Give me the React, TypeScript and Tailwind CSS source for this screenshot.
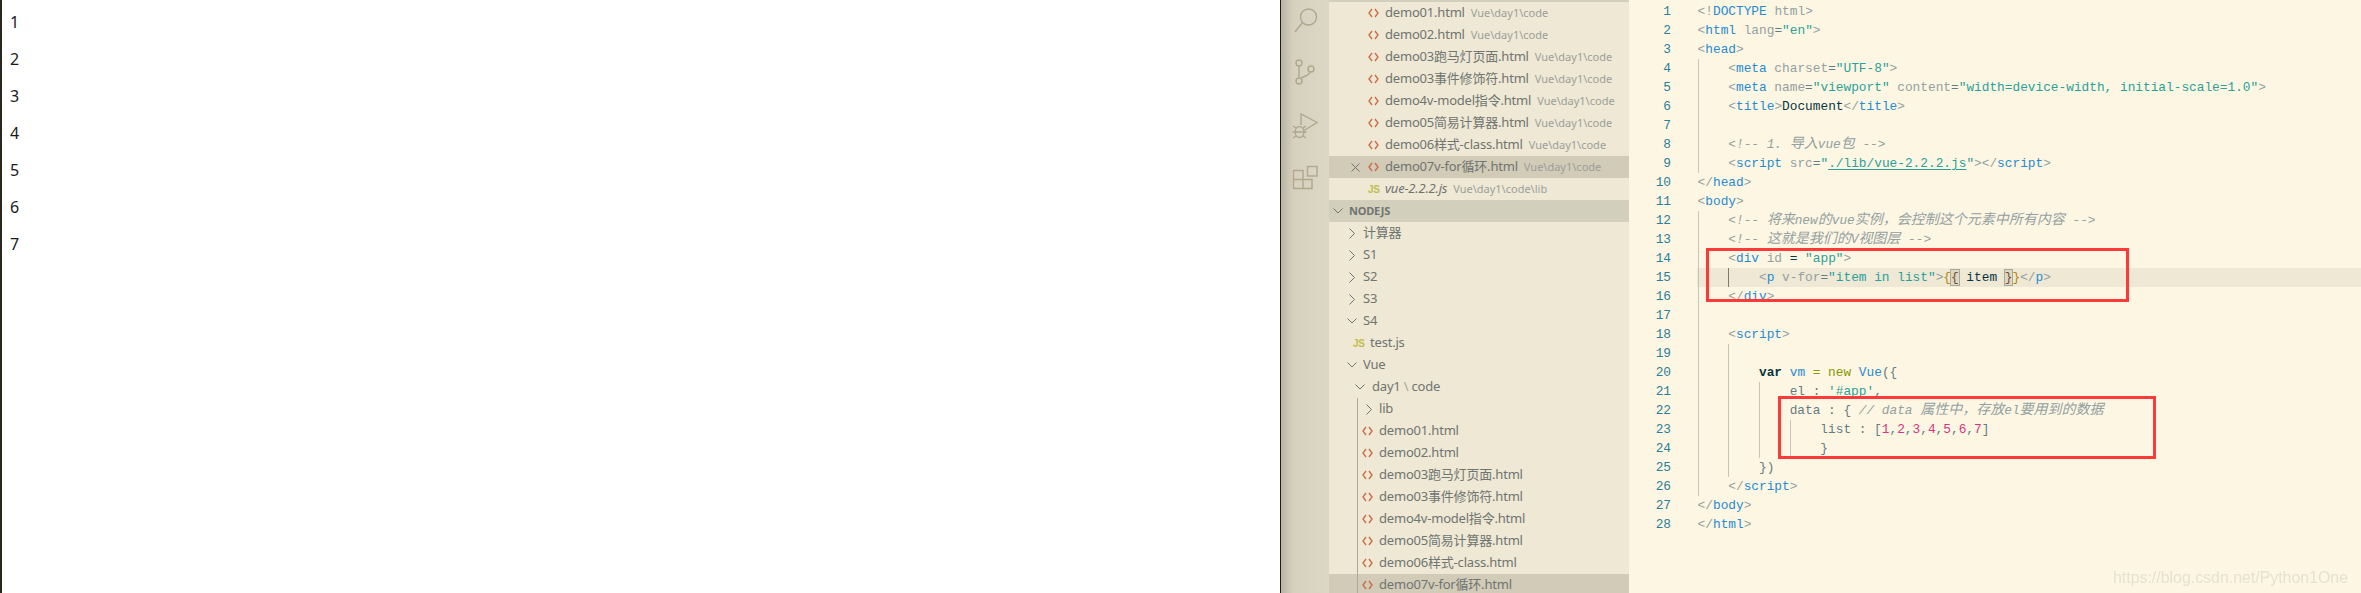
import React from 'react';

const cjk = '"Noto Sans CJK SC"';

type Token = [string, string];

const BR = 'text-[#93a1a1]';
const TAG = 'text-[#268bd2]';
const ATTR = 'text-[#93a1a1]';
const STR = 'text-[#2aa198]';
const TXT = 'text-[#657b83]';
const DARK = 'text-[#073642]';
const COM = 'text-[#93a1a1] italic';
const ZH = 'text-[#93a1a1] italic text-[14px]';
const KEY = 'text-[#859900]';
const NUM = 'text-[#d33682]';
const LINK = 'text-[#2aa198] underline underline-offset-2';

interface CodeLine {
  indent: number;
  guides: number;
  tokens: Token[];
}

const tag = (name: string, close = false): Token[] => [
  [close ? '</' : '<', BR],
  [name, TAG],
  ['>', BR],
];

const lines: CodeLine[] = [
  { indent: 0, guides: 0, tokens: [['<!', BR], ['DOCTYPE', TAG], [' html', ATTR], ['>', BR]] },
  { indent: 0, guides: 0, tokens: [['<', BR], ['html', TAG], [' lang', ATTR], ['=', TXT], ['"en"', STR], ['>', BR]] },
  { indent: 0, guides: 0, tokens: tag('head') },
  { indent: 1, guides: 1, tokens: [['<', BR], ['meta', TAG], [' charset', ATTR], ['=', TXT], ['"UTF-8"', STR], ['>', BR]] },
  {
    indent: 1,
    guides: 1,
    tokens: [
      ['<', BR],
      ['meta', TAG],
      [' name', ATTR],
      ['=', TXT],
      ['"viewport"', STR],
      [' content', ATTR],
      ['=', TXT],
      ['"width=device-width, initial-scale=1.0"', STR],
      ['>', BR],
    ],
  },
  { indent: 1, guides: 1, tokens: [...tag('title'), ['Document', DARK], ...tag('title', true)] },
  { indent: 1, guides: 1, tokens: [] },
  { indent: 1, guides: 1, tokens: [['<!-- 1. ', COM], ['导入', ZH], ['vue', COM], ['包', ZH], [' -->', COM]] },
  {
    indent: 1,
    guides: 1,
    tokens: [
      ['<', BR],
      ['script', TAG],
      [' src', ATTR],
      ['=', TXT],
      ['"', STR],
      ['./lib/vue-2.2.2.js', LINK],
      ['"', STR],
      ['>', BR],
      ...tag('script', true),
    ],
  },
  { indent: 0, guides: 0, tokens: tag('head', true) },
  { indent: 0, guides: 0, tokens: tag('body') },
  {
    indent: 1,
    guides: 1,
    tokens: [
      ['<!-- ', COM],
      ['将来', ZH],
      ['new', COM],
      ['的', ZH],
      ['vue', COM],
      ['实例，会控制这个元素中所有内容', ZH],
      [' -->', COM],
    ],
  },
  { indent: 1, guides: 1, tokens: [['<!-- ', COM], ['这就是我们的', ZH], ['V', COM], ['视图层', ZH], [' -->', COM]] },
  { indent: 1, guides: 1, tokens: [['<', BR], ['div', TAG], [' id', ATTR], [' = ', DARK], ['"app"', STR], ['>', BR]] },
  {
    indent: 2,
    guides: 2,
    tokens: [
      ['<', BR],
      ['p', TAG],
      [' v-for', ATTR],
      ['=', TXT],
      ['"item in list"', STR],
      ['>', BR],
      ['{', 'text-[#b58900]'],
      ['{', 'text-[#7a4a2a] bg-[#dcd8c6] outline outline-[#a9a99a]'],
      [' item ', DARK],
      ['}', 'text-[#7a4a2a] bg-[#dcd8c6] outline outline-[#a9a99a]'],
      ['}', 'text-[#b58900]'],
      ['</', BR],
      ['p', TAG],
      ['>', BR],
    ],
  },
  { indent: 1, guides: 1, tokens: tag('div', true) },
  { indent: 1, guides: 1, tokens: [] },
  { indent: 1, guides: 1, tokens: tag('script') },
  { indent: 2, guides: 2, tokens: [] },
  {
    indent: 2,
    guides: 2,
    tokens: [
      ['var', 'text-[#073642] font-bold'],
      [' ', TXT],
      ['vm', TAG],
      [' = ', KEY],
      ['new', KEY],
      [' ', TXT],
      ['Vue', TAG],
      ['({', TXT],
    ],
  },
  { indent: 3, guides: 3, tokens: [['el', TXT], [' : ', TXT], ["'", STR], ['#app', STR], ["'", STR], [',', TXT]] },
  {
    indent: 3,
    guides: 3,
    tokens: [
      ['data', TXT],
      [' : { ', TXT],
      ['// data ', COM],
      ['属性中，存放', ZH],
      ['el', COM],
      ['要用到的数据', ZH],
    ],
  },
  {
    indent: 4,
    guides: 4,
    tokens: [
      ['list', TXT],
      [' : [', TXT],
      ['1', NUM],
      [',', TXT],
      ['2', NUM],
      [',', TXT],
      ['3', NUM],
      [',', TXT],
      ['4', NUM],
      [',', TXT],
      ['5', NUM],
      [',', TXT],
      ['6', NUM],
      [',', TXT],
      ['7', NUM],
      [']', TXT],
    ],
  },
  { indent: 4, guides: 4, tokens: [['}', TXT]] },
  { indent: 2, guides: 2, tokens: [['})', TXT]] },
  { indent: 1, guides: 1, tokens: tag('script', true) },
  { indent: 0, guides: 0, tokens: tag('body', true) },
  { indent: 0, guides: 0, tokens: tag('html', true) },
];

function FileIcon() {
  return (
    <svg width="11" height="10" viewBox="0 0 11 10" fill="none" stroke="#c9704a" strokeWidth="1.4" className="mr-[6px] shrink-0">
      <path d="M4 1 L1 5 L4 9" />
      <path d="M7 1 L10 5 L7 9" />
    </svg>
  );
}

function JsIcon() {
  return (
    <span
      className="w-[11px] mr-[6px] shrink-0 text-[10px] font-bold text-[#c3bd4c]"
      style={{ fontFamily: '"Liberation Sans", sans-serif' }}
    >
      JS
    </span>
  );
}

function ChevronRight({ className }: { className: string }) {
  return (
    <svg width="6" height="11" viewBox="0 0 6 11" fill="none" stroke="#6f7570" strokeWidth="1" className={`shrink-0 ${className}`}>
      <path d="M0.5 0.5 L5.5 5.5 L0.5 10.5" />
    </svg>
  );
}

function ChevronDown({ className }: { className: string }) {
  return (
    <svg width="10" height="6" viewBox="0 0 10 6" fill="none" stroke="#6f7570" strokeWidth="1" className={`shrink-0 ${className}`}>
      <path d="M0.5 0.5 L5 5 L9.5 0.5" />
    </svg>
  );
}

function Suffix({ children }: { children: string }) {
  return <span className="ml-[6px] text-[11px] tracking-normal text-[#9aa09a]">{children}</span>;
}

const openFiles = [
  ['demo01.html', 'Vue\\day1\\code'],
  ['demo02.html', 'Vue\\day1\\code'],
  ['demo03跑马灯页面.html', 'Vue\\day1\\code'],
  ['demo03事件修饰符.html', 'Vue\\day1\\code'],
  ['demo4v-model指令.html', 'Vue\\day1\\code'],
  ['demo05简易计算器.html', 'Vue\\day1\\code'],
  ['demo06样式-class.html', 'Vue\\day1\\code'],
];

const treeFiles = [
  'demo01.html',
  'demo02.html',
  'demo03跑马灯页面.html',
  'demo03事件修饰符.html',
  'demo4v-model指令.html',
  'demo05简易计算器.html',
  'demo06样式-class.html',
];

const rowClass = 'flex items-center h-[22px] whitespace-nowrap tracking-[-0.2px]';

function Sidebar() {
  return (
    <div
      className="w-[300px] shrink-0 h-full overflow-hidden bg-[#eee8d5] text-[13px] text-[#6f7570]"
      style={{ fontFamily: `"Noto Sans", ${cjk}, sans-serif` }}
    >
      <div className="h-[2px] bg-[#d3cfbd]" />
      {openFiles.map(([name, path]) => (
        <div key={name} className={`${rowClass} pl-[39px]`}>
          <FileIcon />
          <span>{name}</span>
          <Suffix>{path}</Suffix>
        </div>
      ))}
      <div className={`${rowClass} pl-[22px] bg-[#d1cbb8]`}>
        <svg width="9" height="9" viewBox="0 0 9 9" stroke="#6f7570" strokeWidth="1" className="mr-[8px] shrink-0">
          <path d="M0.5 0.5 L8.5 8.5 M8.5 0.5 L0.5 8.5" />
        </svg>
        <FileIcon />
        <span>demo07v-for循环.html</span>
        <Suffix>Vue\day1\code</Suffix>
      </div>
      <div className={`${rowClass} pl-[39px]`}>
        <JsIcon />
        <span className="italic">vue-2.2.2.js</span>
        <Suffix>Vue\day1\code\lib</Suffix>
      </div>
      <div className={`${rowClass} pl-[4px] bg-[#d3cfbd]`}>
        <ChevronDown className="mr-[6px]" />
        <span className="text-[11px] font-bold">NODEJS</span>
      </div>
      {['计算器', 'S1', 'S2', 'S3'].map((name) => (
        <div key={name} className={`${rowClass} pl-[20px]`}>
          <ChevronRight className="mr-[8px]" />
          <span>{name}</span>
        </div>
      ))}
      <div className={`${rowClass} pl-[18px]`}>
        <ChevronDown className="mr-[6px]" />
        <span>S4</span>
      </div>
      <div className={`${rowClass} pl-[24px]`}>
        <JsIcon />
        <span>test.js</span>
      </div>
      <div className={`${rowClass} pl-[18px]`}>
        <ChevronDown className="mr-[6px]" />
        <span>Vue</span>
      </div>
      <div className={`${rowClass} pl-[26px]`}>
        <ChevronDown className="mr-[7px]" />
        <span>
          day1 <span className="text-[#a9a99a]">\</span> code
        </span>
      </div>
      <div className="relative">
        <div className="absolute left-[28px] top-0 bottom-0 w-px bg-[#aeaa99] z-10" />
        <div className={`${rowClass} pl-[37px]`}>
          <ChevronRight className="mr-[7px]" />
          <span>lib</span>
        </div>
        {treeFiles.map((name) => (
          <div key={name} className={`${rowClass} pl-[33px]`}>
            <FileIcon />
            <span>{name}</span>
          </div>
        ))}
        <div className={`${rowClass} pl-[33px] bg-[#d1cbb8]`}>
          <FileIcon />
          <span>demo07v-for循环.html</span>
        </div>
      </div>
    </div>
  );
}

function ActivityBar() {
  return (
    <div className="w-[49px] shrink-0 h-full border-l border-[#1f1c16] bg-linear-to-r from-[#b8b4a2] via-[#d6d1be] via-25% to-[#ddd8c5]">
      <svg width="48" height="52" viewBox="0 0 48 52" fill="none" stroke="#b0a78e" strokeWidth="1.4">
        <circle cx="27.5" cy="17" r="8" />
        <path d="M21.5 22.5 L14 32" />
      </svg>
      <svg width="48" height="52" viewBox="0 0 48 52" fill="none" stroke="#b0a78e" strokeWidth="1.4">
        <circle cx="18" cy="11" r="3" />
        <circle cx="18" cy="29" r="3" />
        <circle cx="30" cy="17" r="3" />
        <path d="M18 14 V26 M29 20 C28 24 22 24 20 26.5" />
      </svg>
      <svg width="48" height="52" viewBox="0 0 48 52" fill="none" stroke="#b0a78e" strokeWidth="1.4">
        <path d="M20 21 V10 L36 18.500 L23 26.500" />
        <ellipse cx="18.500" cy="28" rx="4.500" ry="5.500" />
        <path d="M12 22 L15 24 M25 22 L22 24 M11.500 28 H25.500 M12 34 L15 32 M25 34 L22 32" />
      </svg>
      <svg width="48" height="52" viewBox="0 0 48 52" fill="none" stroke="#b0a78e" strokeWidth="1.4">
        <rect x="26.500" y="10.500" width="9.500" height="9.500" />
        <path d="M12.500 14.500 H22 V23.500 H31 V32.500 H12.500 Z M12.500 23.500 H22 V32.500" />
      </svg>
    </div>
  );
}

function Editor() {
  return (
    <div
      className="relative flex-1 h-full overflow-hidden bg-[#fdf6e3] pt-[2px] text-[12.8px]"
      style={{ fontFamily: `"Liberation Mono", ${cjk}, monospace` }}
    >
      {lines.map((line, i) => (
        <div key={i} className={`flex h-[19px] leading-[19px] whitespace-pre ${i === 14 ? 'bg-linear-to-r from-[#fdf6e3] from-[68px] to-[#eee8d5] to-[68px]' : ''}`}>
          <div className="w-[42px] shrink-0 text-right text-[#2b7f9b]">{i + 1}</div>
          <div className="w-[26.6px] shrink-0" />
          {Array.from({ length: line.indent }).map((_, g) => (
            <div
              key={g}
              className={`w-[30.7px] shrink-0 border-l ${i === 14 && g === 1 ? 'border-[#7d7a6c]' : g < line.guides ? 'border-[#c6c4b4]' : 'border-transparent'}`}
            />
          ))}
          <div>
            {line.tokens.map(([text, cls], t) => (
              <span key={t} className={cls}>
                {text}
              </span>
            ))}
          </div>
        </div>
      ))}
      {/* annotation boxes drawn over the code */}
      <div className="absolute left-[77px] top-[248px] w-[423px] h-[54px] border-[3px] border-[#fc3a3a]" />
      <div className="absolute left-[149px] top-[396px] w-[378px] h-[63px] border-[3px] border-[#fc3a3a]" />
      <div
        className="absolute left-[484px] top-[566px] text-[15.9px] text-[#e6e1d2] blur-[0.4px]"
        style={{ fontFamily: '"Liberation Sans", sans-serif' }}
      >
        https://blog.csdn.net/Python1One
      </div>
    </div>
  );
}

export default function App() {
  return (
    <div className="flex w-[2361px] h-[593px] overflow-hidden bg-white">
      <div
        className="w-[1280px] shrink-0 h-full border-l-2 border-[#2a2620] pl-[8px] pt-[12px] text-[16px] leading-[21px] text-[#1a1a1a]"
        style={{ fontFamily: '"Noto Sans", sans-serif' }}
      >
        {[1, 2, 3, 4, 5, 6, 7].map((n) => (
          <p key={n} className="mb-[16px]">
            {n}
          </p>
        ))}
      </div>
      <ActivityBar />
      <Sidebar />
      <Editor />
    </div>
  );
}
